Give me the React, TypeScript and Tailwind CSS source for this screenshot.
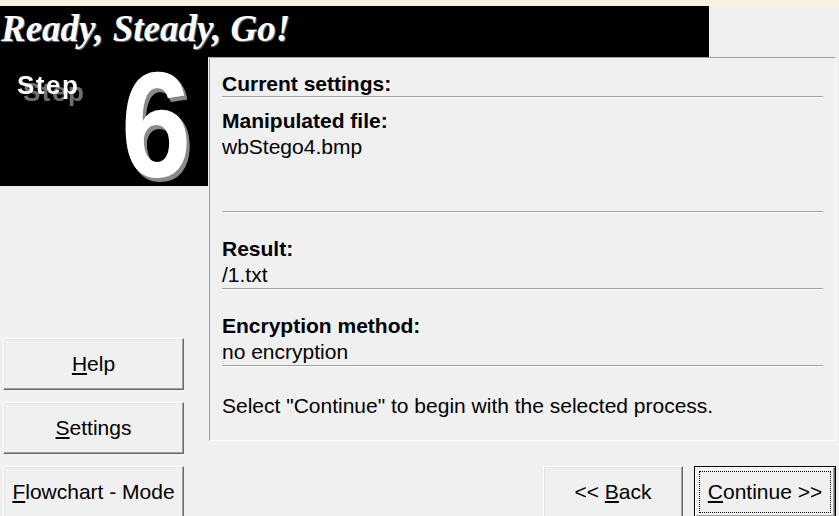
import React from 'react';

const sans = "font-['Liberation_Sans',Arial,sans-serif]";

const WinButton: React.FC<{ className?: string; isDefault?: boolean; children: React.ReactNode }> = ({
    className = '',
    isDefault = false,
    children,
}) => {
    if (isDefault) {
        return (
            <div className={`border border-black ${className}`}>
                <div className="h-full w-full border border-t-white border-l-white border-r-[#696969] border-b-[#696969] shadow-[inset_-1px_-1px_0_#a0a0a0] bg-[#f0f0f0] p-[3px]">
                    <div className="h-full w-full border border-dotted border-black flex items-center justify-center text-[21px] text-black">
                        {children}
                    </div>
                </div>
            </div>
        );
    }
    return (
        <div
            className={`bg-[#f0f0f0] border border-t-white border-l-white border-r-[#696969] border-b-[#696969] shadow-[inset_-1px_-1px_0_#a0a0a0,inset_1px_1px_0_#e3e3e3] flex items-center justify-center text-[21px] text-black ${className}`}
        >
            {children}
        </div>
    );
};

const StepLogo: React.FC = () => (
    <svg width="208" height="129" viewBox="0 0 208 129" className="block">
        <defs>
            <filter id="stepShadow" x="-20%" y="-20%" width="150%" height="160%">
                <feFlood floodColor="#6e6e6e" />
                <feComposite in2="SourceAlpha" operator="in" result="gray" />
                <feOffset in="gray" dx="6" dy="7" result="off" />
                <feGaussianBlur in="off" stdDeviation="0.6" result="blur" />
                <feMerge>
                    <feMergeNode in="blur" />
                    <feMergeNode in="SourceGraphic" />
                </feMerge>
            </filter>
            <filter id="extrude" x="-10%" y="-10%" width="130%" height="130%">
                <feFlood floodColor="#8a8a8a" />
                <feComposite in2="SourceAlpha" operator="in" result="gray" />
                <feOffset in="gray" dx="1" dy="1" result="o1" />
                <feOffset in="gray" dx="2" dy="2" result="o2" />
                <feOffset in="gray" dx="3" dy="3" result="o3" />
                <feOffset in="gray" dx="4" dy="4" result="o4" />
                <feMerge>
                    <feMergeNode in="o4" />
                    <feMergeNode in="o3" />
                    <feMergeNode in="o2" />
                    <feMergeNode in="o1" />
                    <feMergeNode in="SourceGraphic" />
                </feMerge>
            </filter>
        </defs>
        <rect width="208" height="129" fill="#000" />
        <g fontFamily="'Liberation Sans', Arial, sans-serif" fontWeight="bold">
            <text x="17" y="37" fontSize="26" letterSpacing="1.5" fill="#ffffff" filter="url(#stepShadow)">
                Step
            </text>
            <g transform="translate(121 120) scale(0.84 1)">
                <text x="0" y="0" fontSize="150" fill="#ffffff" filter="url(#extrude)">
                    6
                </text>
            </g>
        </g>
    </svg>
);

const Separator: React.FC<{ className?: string }> = ({ className = '' }) => (
    <div className={`border-t border-t-[#a0a0a0] border-b border-b-white ${className}`} />
);

const App: React.FC = () => {
    return (
        <div className={`w-[839px] h-[516px] overflow-hidden bg-[#f0f0f0] ${sans}`}>
            {/* top strip */}
            <div className="h-[6px] bg-[#fbf1e2]" />

            {/* banner */}
            <div className="h-[51px] w-[709px] bg-black">
                <div className="font-['Liberation_Serif','Times_New_Roman',serif] italic font-bold text-[37px] leading-[45px] text-white pl-[1px] [text-shadow:1px_1px_1px_#777]">
                    Ready, Steady, Go!
                </div>
            </div>

            <div className="flex">
                {/* left column */}
                <div className="w-[209px] shrink-0 flex flex-col">
                    <StepLogo />
                    <div className="pl-[3px] mt-[152px] flex flex-col gap-[12px]">
                        <WinButton className="w-[181px] h-[52px]">
                            <span><u className="underline-offset-2">H</u>elp</span>
                        </WinButton>
                        <WinButton className="w-[181px] h-[52px]">
                            <span><u className="underline-offset-2">S</u>ettings</span>
                        </WinButton>
                        <WinButton className="w-[181px] h-[52px]">
                            <span><u className="underline-offset-2">F</u>lowchart - Mode</span>
                        </WinButton>
                    </div>
                </div>

                {/* right column */}
                <div className="flex-1 flex flex-col">
                    <div className="w-[627px] h-[384px] border border-t-[#a0a0a0] border-l-[#a0a0a0] border-r-white border-b-white px-[12px] pt-[13px] text-[21px] text-black">
                        <div className="font-bold leading-[25px] h-[25px]">Current settings:</div>
                        <Separator />

                        <div className="mt-[10px] leading-[26px]">
                            <div className="font-bold">Manipulated file:</div>
                            <div>wbStego4.bmp</div>
                        </div>
                        <Separator className="mt-[51px]" />

                        <div className="mt-[23px] leading-[26px]">
                            <div className="font-bold">Result:</div>
                            <div>/1.txt</div>
                        </div>
                        <Separator />

                        <div className="mt-[23px] leading-[26px]">
                            <div className="font-bold">Encryption method:</div>
                            <div>no encryption</div>
                        </div>
                        <Separator />

                        <div className="mt-[26px] leading-[26px]">
                            Select "Continue" to begin with the selected process.
                        </div>
                    </div>

                    <div className="mt-[25px] flex justify-end gap-[11px] pr-[3px]">
                        <WinButton className="w-[140px] h-[52px]">
                            <span>&lt;&lt; <u className="underline-offset-2">B</u>ack</span>
                        </WinButton>
                        <WinButton isDefault className="w-[142px] h-[52px]">
                            <span><u className="underline-offset-2">C</u>ontinue &gt;&gt;</span>
                        </WinButton>
                    </div>
                </div>
            </div>
        </div>
    );
};

export default App;
